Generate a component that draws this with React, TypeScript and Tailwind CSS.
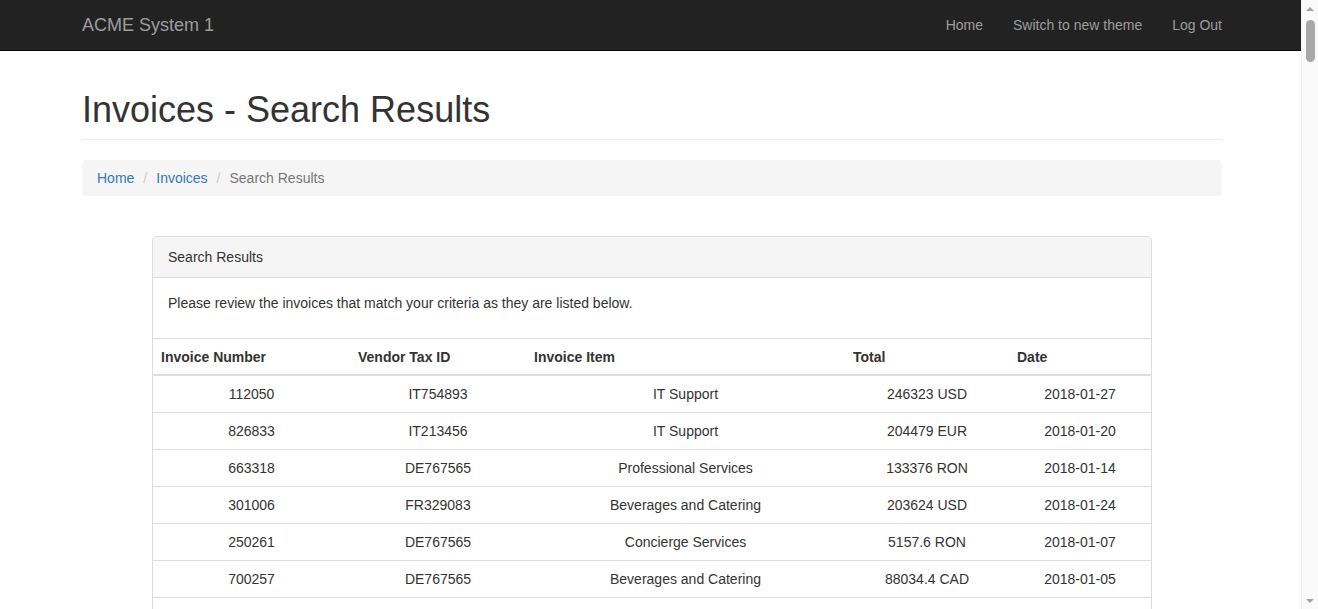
type Invoice = { number: string; vendor: string; item: string; total: string; date: string };

const rows: Invoice[] = [
  { number: "112050", vendor: "IT754893", item: "IT Support", total: "246323 USD", date: "2018-01-27" },
  { number: "826833", vendor: "IT213456", item: "IT Support", total: "204479 EUR", date: "2018-01-20" },
  { number: "663318", vendor: "DE767565", item: "Professional Services", total: "133376 RON", date: "2018-01-14" },
  { number: "301006", vendor: "FR329083", item: "Beverages and Catering", total: "203624 USD", date: "2018-01-24" },
  { number: "250261", vendor: "DE767565", item: "Concierge Services", total: "5157.6 RON", date: "2018-01-07" },
  { number: "700257", vendor: "DE767565", item: "Beverages and Catering", total: "88034.4 CAD", date: "2018-01-05" },
];

const headers = ["Invoice Number", "Vendor Tax ID", "Invoice Item", "Total", "Date"];

// classic browser scrollbar of the original page
function Scrollbar() {
  return (
    <div className="flex h-[609px] w-[17px] shrink-0 flex-col items-center border-l border-[#f0f0f0] bg-[#fafafa]">
      <div className="flex h-[17px] w-full items-center justify-center">
        <div className="h-0 w-0 border-x-[4px] border-b-[4px] border-x-transparent border-b-[#a3a3a3]" />
      </div>
      <div className="mt-[3px] h-[42px] w-[9px] rounded-full bg-[#a8a8a8]" />
      <div className="flex-1" />
      <div className="flex h-[17px] w-full items-center justify-center">
        <div className="h-0 w-0 border-x-[4px] border-t-[4px] border-x-transparent border-t-[#a3a3a3]" />
      </div>
    </div>
  );
}

export default function App() {
  return (
    <div
      className="flex h-[609px] overflow-hidden bg-white text-[14px] leading-[20px] text-[#333]"
      style={{ fontFamily: '"Liberation Sans", Arial, sans-serif' }}
    >
      <div className="w-[1301px] shrink-0">
        {/* Navbar */}
        <nav className="h-[51px] border-b border-[#080808] bg-[#222]">
          <div className="ml-[67px] flex h-[50px] w-[1170px] items-center justify-between px-[15px]">
            <a className="text-[18px] leading-[20px] text-[#9d9d9d]">ACME System 1</a>
            <ul className="flex">
              <li>
                <a className="block px-[15px] py-[15px] text-[#9d9d9d]">Home</a>
              </li>
              <li>
                <a className="block px-[15px] py-[15px] text-[#9d9d9d]">Switch to new theme</a>
              </li>
              <li>
                <a className="-mr-[15px] block px-[15px] py-[15px] text-[#9d9d9d]">Log Out</a>
              </li>
            </ul>
          </div>
        </nav>

        <div className="ml-[67px] w-[1170px] px-[15px]">
          {/* Page header */}
          <div className="mt-[39px] border-b border-[#eee] pb-[9px]">
            <h1 className="text-[36px] leading-[40px] font-normal text-[#333]">Invoices - Search Results</h1>
          </div>

          {/* Breadcrumb */}
          <ol className="mt-[20px] flex rounded-[4px] bg-[#f5f5f5] px-[15px] py-[8px]">
            <li>
              <a className="text-[#337ab7]">Home</a>
            </li>
            <li className="px-[9px] text-[#ccc]">/</li>
            <li>
              <a className="text-[#337ab7]">Invoices</a>
            </li>
            <li className="px-[9px] text-[#ccc]">/</li>
            <li className="text-[#777]">Search Results</li>
          </ol>

          {/* Panel */}
          <div className="mx-auto mt-[40px] w-[1000px] rounded-[4px] border border-[#ddd] bg-white">
            <div className="rounded-t-[3px] border-b border-[#ddd] bg-[#f5f5f5] px-[15px] py-[10px]">
              Search Results
            </div>
            <div className="p-[15px]">
              <p className="mb-[10px]">
                Please review the invoices that match your criteria as they are listed below.
              </p>
            </div>
            <table className="w-full table-fixed border-collapse">
              <colgroup>
                <col className="w-[197px]" />
                <col className="w-[176px]" />
                <col className="w-[319px]" />
                <col className="w-[164px]" />
                <col />
              </colgroup>
              <thead>
                <tr>
                  {headers.map((h) => (
                    <th key={h} className="border-t border-b-2 border-[#ddd] px-[8px] pt-[8px] pb-[7px] text-left font-bold">
                      {h}
                    </th>
                  ))}
                </tr>
              </thead>
              <tbody>
                {rows.map((r) => (
                  <tr key={r.number}>
                    <td className="border-t border-[#ddd] p-[8px] text-center">{r.number}</td>
                    <td className="border-t border-[#ddd] p-[8px] text-center">{r.vendor}</td>
                    <td className="border-t border-[#ddd] p-[8px] text-center">{r.item}</td>
                    <td className="border-t border-[#ddd] p-[8px] text-center">{r.total}</td>
                    <td className="border-t border-[#ddd] p-[8px] text-center">{r.date}</td>
                  </tr>
                ))}
                <tr>
                  <td colSpan={5} className="h-[37px] border-t border-[#ddd]" />
                </tr>
              </tbody>
            </table>
          </div>
        </div>
      </div>
      <Scrollbar />
    </div>
  );
}
